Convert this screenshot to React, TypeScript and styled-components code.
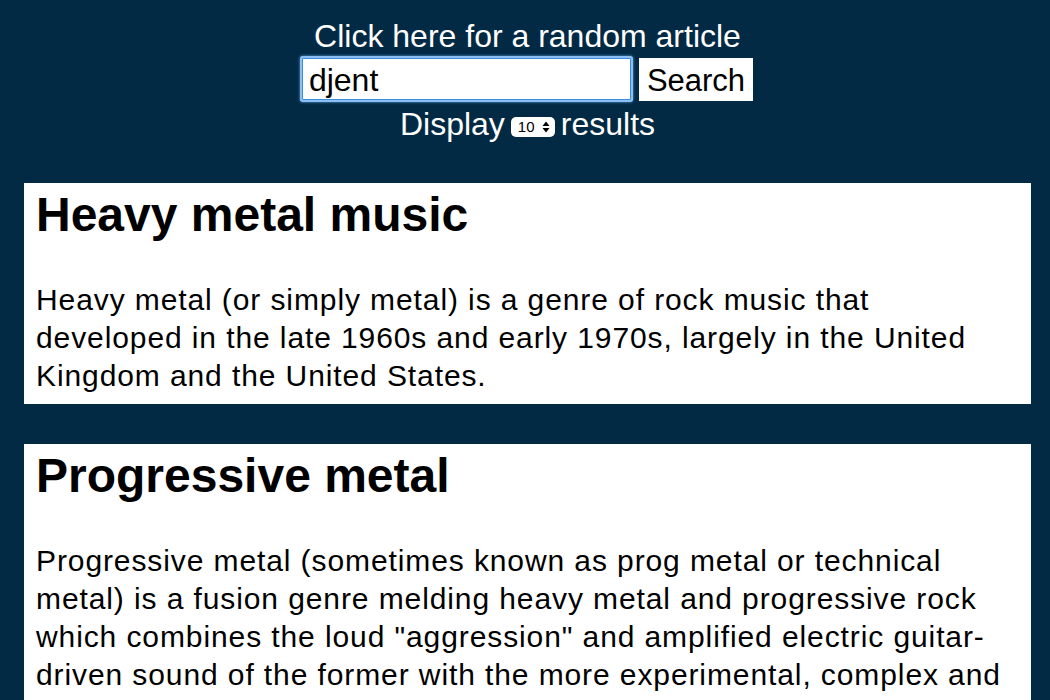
import { FC } from 'react';

import styled, { createGlobalStyle } from 'styled-components';

interface Article {
    title: string;
    extract: string;
}

const articles: Article[] = [
    {
        title: 'Heavy metal music',
        extract:
            'Heavy metal (or simply metal) is a genre of rock music that developed in the late 1960s and early 1970s, largely in the United Kingdom and the United States.',
    },
    {
        title: 'Progressive metal',
        extract:
            'Progressive metal (sometimes known as prog metal or technical metal) is a fusion genre melding heavy metal and progressive rock which combines the loud "aggression" and amplified electric guitar-driven sound of the former with the more experimental, complex and often lengthy compositional structures of the latter.',
    },
    {
        title: 'Djent',
        extract:
            'Djent is a style of progressive metal characterised by heavily distorted, palm-muted, low-pitched guitar chords played with rhythmic complexity.',
    },
];

const GlobalStyle = createGlobalStyle`
    html, body {
        margin: 0;
        padding: 0;
        background: #022a44;
    }

    body {
        font-family: 'Liberation Sans', Arial, Helvetica, sans-serif;
    }
`;

const Page = styled.div`
    padding: 18px 19px 24px 24px;
`;

const Header = styled.header`
    display: flex;
    flex-direction: column;
    align-items: center;
    color: #ffffff;
    font-size: 32px;
    margin-bottom: 40px;
`;

const RandomLink = styled.a`
    color: #ffffff;
    text-decoration: none;
    line-height: 37px;
    cursor: pointer;
`;

const SearchRow = styled.form`
    display: flex;
    align-items: flex-start;
    gap: 8px;
    margin-top: 3px;
`;

const SearchInput = styled.input`
    box-sizing: border-box;
    width: 329px;
    height: 42px;
    padding: 2px 6px 0;
    border: 1px solid #3a8ee0;
    border-radius: 1px;
    box-shadow: 0 0 0 2px #8dbff2, 0 0 3px 2px #5fa3e8;
    outline: none;
    background: #ffffff;
    color: #000000;
    font-family: inherit;
    font-size: 32px;
`;

const SearchButton = styled.button`
    box-sizing: border-box;
    height: 43px;
    padding: 2px 8px 0;
    border: none;
    background: #ffffff;
    color: #000000;
    font-family: inherit;
    font-size: 31px;
    cursor: pointer;
`;

const DisplayRow = styled.div`
    display: flex;
    align-items: center;
    gap: 6px;
    margin-top: 5px;
    line-height: 37px;
`;

const SelectWrap = styled.span`
    position: relative;
    display: inline-flex;
    margin-top: 4px;
`;

const CountSelect = styled.select`
    appearance: none;
    box-sizing: border-box;
    width: 44px;
    height: 20px;
    padding: 0 0 0 7px;
    border: none;
    border-radius: 5px;
    background: #ffffff;
    color: #000000;
    font-family: inherit;
    font-size: 15px;
    line-height: 20px;
`;

const Arrows = styled.svg`
    position: absolute;
    right: 5px;
    top: 4px;
    pointer-events: none;
`;

const ResultList = styled.main`
    display: flex;
    flex-direction: column;
    gap: 40px;
`;

const Card = styled.article`
    background: #ffffff;
    color: #000000;
    padding: 4px 10px 9px 12px;
`;

const Title = styled.h2`
    margin: 0 0 39px;
    font-size: 48px;
    font-weight: bold;
    line-height: 55px;
`;

const Extract = styled.p`
    margin: 0;
    font-size: 30px;
    line-height: 38px;
    letter-spacing: 0.9px;
`;

const ResultCard: FC<Article> = ({ title, extract }) => (
    <Card>
        <Title>{title}</Title>
        <Extract>{extract}</Extract>
    </Card>
);

const App: FC = () => (
    <>
        <GlobalStyle />
        <Page>
            <Header>
                <RandomLink>Click here for a random article</RandomLink>
                <SearchRow onSubmit={(e) => e.preventDefault()}>
                    <SearchInput defaultValue="djent" />
                    <SearchButton type="submit">Search</SearchButton>
                </SearchRow>
                <DisplayRow>
                    <span>Display</span>
                    <SelectWrap>
                        <CountSelect defaultValue="10">
                            <option value="5">5</option>
                            <option value="10">10</option>
                            <option value="20">20</option>
                        </CountSelect>
                        <Arrows width="8" height="12" viewBox="0 0 8 12">
                            <path d="M4 0.5 L7.5 5 L0.5 5 Z M4 11.5 L7.5 7 L0.5 7 Z" fill="#000" />
                        </Arrows>
                    </SelectWrap>
                    <span>results</span>
                </DisplayRow>
            </Header>
            <ResultList>
                {articles.map((a) => (
                    <ResultCard key={a.title} {...a} />
                ))}
            </ResultList>
        </Page>
    </>
);

export default App;
